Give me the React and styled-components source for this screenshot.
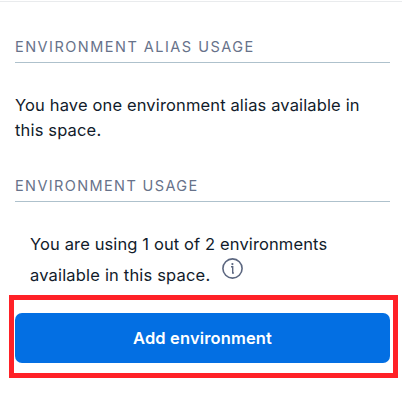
import React from 'react';
import styled, { createGlobalStyle } from 'styled-components';

const GlobalStyle = createGlobalStyle`
  * {
    box-sizing: border-box;
  }
  body {
    margin: 0;
    background: #ffffff;
    font-family: Inter, "Liberation Sans", sans-serif;
  }
`;

const Sidebar = styled.aside`
  width: 402px;
  height: 399px;
  margin-top: 1px;
  padding: 35px 12px 0 15px;
  border-top: 1px solid #e9ebed;
  overflow: hidden;
`;

const SectionTitle = styled.h2`
  height: 26px;
  margin: 0;
  border-bottom: 1px solid #aec1cc;
  color: #67728a;
  font-size: 14.5px;
  font-weight: 400;
  line-height: 20px;
  letter-spacing: ${(props) => props.$spacing};
  white-space: nowrap;
`;

const AliasText = styled.p`
  margin: 30px 0 33px;
  color: #111b2b;
  font-size: 16.5px;
  line-height: 25px;
  white-space: nowrap;
`;

const UsageText = styled.div`
  height: 93px;
  padding: 27px 0 0 15px;
  color: #111b2b;
  font-size: 16.5px;
  line-height: 31px;
  white-space: nowrap;
`;

const Line = styled.span`
  display: block;
  letter-spacing: ${(props) => props.$spacing};
`;

const UsageRow = styled.div`
  display: flex;
  gap: 12px;
`;

const InfoIcon = styled.svg`
  width: 21px;
  height: 21px;
  flex: none;
  margin-top: -2px;
`;

const Highlight = styled.div`
  width: 389px;
  height: 83px;
  margin-left: -6px;
  padding: 13px 3px 10px 1px;
  border: 5px solid #ff2127;
`;

const AddButton = styled.button`
  display: block;
  width: 100%;
  height: 50px;
  padding: 0;
  border: 0;
  border-radius: 7px;
  background: #036fe3;
  color: #ffffff;
  font-family: inherit;
  font-size: 16.5px;
  font-weight: 600;
  line-height: 50px;
  letter-spacing: 0.13px;
  cursor: pointer;
`;

function App() {
  return (
    <>
      <GlobalStyle />
      <Sidebar>
        <SectionTitle $spacing="1.48px">ENVIRONMENT ALIAS USAGE</SectionTitle>
        <AliasText>
          <Line $spacing="0.14px">You have one environment alias available in</Line>
          <Line $spacing="0.16px">this space.</Line>
        </AliasText>
        <SectionTitle $spacing="1.38px">ENVIRONMENT USAGE</SectionTitle>
        <UsageText>
          <Line $spacing="0.12px">You are using 1 out of 2 environments</Line>
          <UsageRow>
            <Line $spacing="0.18px">available in this space.</Line>
            <InfoIcon viewBox="0 0 21 21" fill="none" stroke="#5c6780">
              <circle cx="10.5" cy="10.5" r="9.6" strokeWidth="1.6" />
              <path d="M9 8.8h1.7v6.2h1.2" strokeWidth="1.4" />
              <circle cx="10.4" cy="6.1" r="1.1" fill="#5c6780" stroke="none" />
            </InfoIcon>
          </UsageRow>
        </UsageText>
        <Highlight>
          <AddButton type="button">Add environment</AddButton>
        </Highlight>
      </Sidebar>
    </>
  );
}

export default App;
